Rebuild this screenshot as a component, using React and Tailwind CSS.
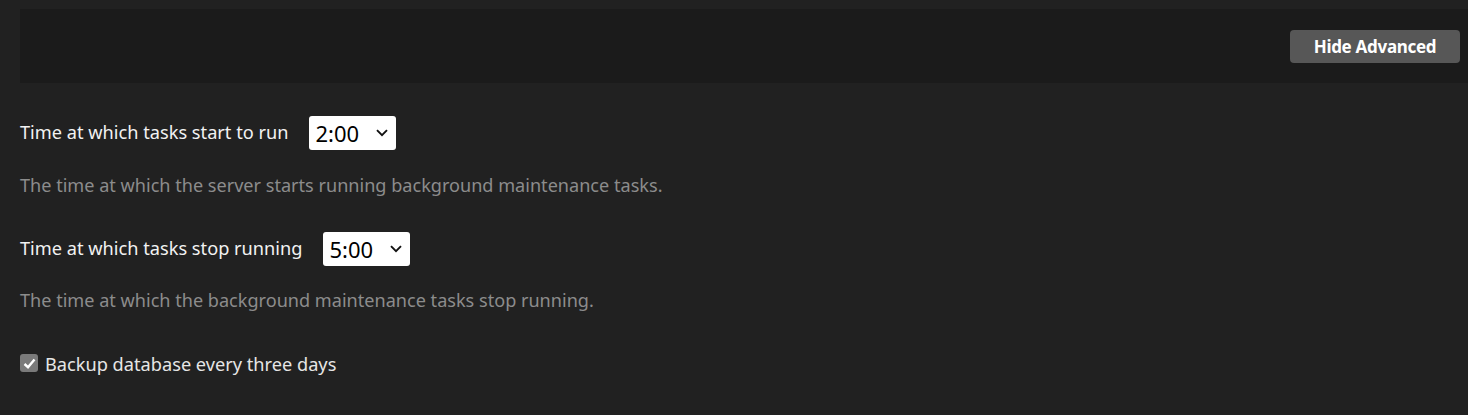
import React, { useState } from 'react';

const TimeSelect = ({ value, options }) => (
  <div className="relative">
    <select
      defaultValue={value}
      className="appearance-none bg-white text-black rounded-[3px] h-[34px] w-[87px] pl-[6px] pr-[26px] text-[22px] leading-none outline-none"
      style={{ fontFamily: '"Noto Sans", sans-serif' }}
    >
      {options.map((o) => (
        <option key={o} value={o}>{o}</option>
      ))}
    </select>
    <svg className="pointer-events-none absolute right-[8px] top-[13px]" width="12" height="8" viewBox="0 0 12 8">
      <path d="M1 1.2 L6 6.2 L11 1.2" fill="none" stroke="#111" strokeWidth="1.9" />
    </svg>
  </div>
);

const hours = Array.from({ length: 24 }, (_, i) => `${i}:00`);

export default function App() {
  const [backup, setBackup] = useState(true);

  return (
    <div className="w-[1468px] h-[415px] bg-[#212121] text-white overflow-hidden" style={{ fontFamily: '"Noto Sans", "Open Sans", sans-serif' }}>
      {/* Top bar */}
      <div className="pt-[9px] pl-[20px]">
        <div className="h-[74px] bg-[#1b1b1b] flex items-center justify-end pr-[8px]">
          <button className="mt-[1px] h-[33px] w-[170px] rounded-[4px] bg-[#575757] text-white font-bold text-[17px] tracking-[-0.3px]">
            Hide Advanced
          </button>
        </div>
      </div>

      <div className="px-[20px] pt-[33px]">
        {/* Start time */}
        <div className="flex items-center h-[34px]">
          <span className="text-[18.2px] text-[#f2f2f2]">Time at which tasks start to run</span>
          <div className="ml-[21px]">
            <TimeSelect value="2:00" options={hours} />
          </div>
        </div>
        <p className="mt-[23px] text-[18.1px] text-[#8c8c8c] leading-[24px]">
          The time at which the server starts running background maintenance tasks.
        </p>

        {/* Stop time */}
        <div className="flex items-center h-[34px] mt-[35px]">
          <span className="text-[18.2px] text-[#f2f2f2]">Time at which tasks stop running</span>
          <div className="ml-[21px]">
            <TimeSelect value="5:00" options={hours} />
          </div>
        </div>
        <p className="mt-[22px] text-[18.1px] text-[#8c8c8c] leading-[24px]">
          The time at which the background maintenance tasks stop running.
        </p>

        {/* Backup checkbox */}
        <label className="flex items-start mt-[37px] cursor-pointer">
          <span
            onClick={() => setBackup(!backup)}
            className="mt-[5px] w-[18px] h-[18px] rounded-[3px] bg-[#7a7a7a] flex items-center justify-center"
          >
            {backup && (
              <svg width="13" height="11" viewBox="0 0 13 11">
                <path d="M1.5 6 L5 9.2 L11.5 1.5" fill="none" stroke="#fff" strokeWidth="2.4" />
              </svg>
            )}
          </span>
          <span className="ml-[7px] mt-[2px] text-[18.2px] leading-[26px] text-[#e6e6e6]">Backup database every three days</span>
        </label>
      </div>
    </div>
  );
}
